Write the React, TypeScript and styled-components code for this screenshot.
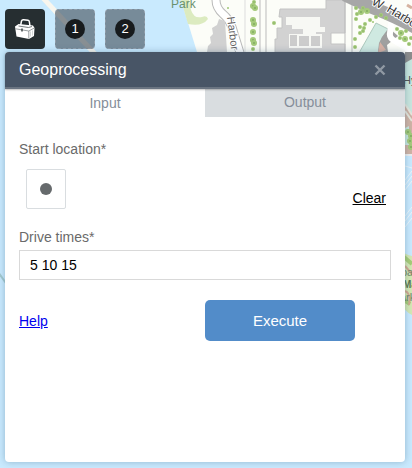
import React, { useState } from "react";
import styled, { createGlobalStyle } from "styled-components";

const GlobalStyle = createGlobalStyle`
  * { box-sizing: border-box; }
  body {
    margin: 0;
    background: #c5e7fa;
    font-family: "Liberation Sans", Arial, sans-serif;
    font-size: 14px;
  }
`;

const Page = styled.main`
  position: relative;
  display: flex;
  flex-direction: column;
  gap: 3px;
  min-height: 100vh;
  padding: 9px 7px 6px 5px;
  overflow: hidden;
`;

const MapCanvas = styled.svg`
  position: absolute;
  inset: 0;
  width: 100%;
  height: 100%;
`;

const Toolbar = styled.nav`
  position: relative;
  display: flex;
  gap: 10px;
`;

const ToolButton = styled.button<{ $active?: boolean }>`
  display: flex;
  align-items: center;
  justify-content: center;
  width: 40px;
  height: 40px;
  padding: 0;
  border: ${(p) => (p.$active ? "0" : "1px dashed #929eaa")};
  border-radius: 4px;
  background: ${(p) => (p.$active ? "#262e31" : "rgba(76, 88, 98, 0.65)")};
  color: #fff;
  cursor: pointer;
`;

const Badge = styled.span`
  width: 20px;
  height: 20px;
  border-radius: 50%;
  background: #171b1d;
  font: 13px/20px "Liberation Sans", Arial, sans-serif;
  text-align: center;
`;

const Panel = styled.section`
  position: relative;
  flex: 1;
  border-radius: 4px;
  background: #fff;
  box-shadow: 0 0 7px rgba(40, 80, 110, 0.35);
`;

const Header = styled.header`
  position: relative;
  display: flex;
  align-items: center;
  justify-content: space-between;
  height: 37px;
  padding: 0 19px 0 14px;
  border-bottom: 2px solid #6a7481;
  border-radius: 4px 4px 0 0;
  background: #485566;
  box-shadow: 0 1px 2px rgba(0, 0, 0, 0.25);
`;

const Title = styled.h1`
  margin: 0;
  color: #fff;
  font-size: 16px;
  font-weight: 400;
  line-height: 20px;
`;

const CloseButton = styled.button`
  display: flex;
  padding: 0;
  border: 0;
  background: none;
  cursor: pointer;
`;

const Tabs = styled.div`
  display: grid;
  grid-template-columns: 1fr 1fr;
`;

const Tab = styled.button<{ $active: boolean }>`
  height: 28px;
  padding: ${(p) => (p.$active ? "0" : "0 0 2px")};
  border: 0;
  background: ${(p) => (p.$active ? "#fff" : "#d9dde0")};
  color: #858e9a;
  font: 14px/20px "Liberation Sans", Arial, sans-serif;
  cursor: pointer;
`;

const Form = styled.form`
  padding: 24px 14px;
`;

const Label = styled.label`
  display: block;
  color: #6a6a6a;
  line-height: 16px;
`;

const LocationRow = styled.div`
  display: flex;
  align-items: flex-end;
  justify-content: space-between;
  margin: 12px 0 20px;
  padding: 0 5px 0 7px;
`;

const PointButton = styled.button`
  display: flex;
  align-items: center;
  justify-content: center;
  width: 40px;
  height: 40px;
  padding: 0;
  border: 1px solid #d9dde0;
  border-radius: 2px;
  background: #fff;
  cursor: pointer;
`;

const Dot = styled.span`
  width: 12px;
  height: 12px;
  border-radius: 50%;
  background: #666a6c;
`;

const TextLink = styled.a<{ $plain?: boolean }>`
  color: ${(p) => (p.$plain ? "#000" : "#0000ee")};
  line-height: 22px;
`;

const TextInput = styled.input`
  display: block;
  width: 100%;
  height: 30px;
  margin-top: 5px;
  padding: 0 10px;
  border: 1px solid #d9d9d9;
  border-radius: 0;
  background: #fff;
  color: #000;
  font: 14px "Liberation Sans", Arial, sans-serif;
`;

const Actions = styled.div`
  display: grid;
  grid-template-columns: 1fr 1fr;
  align-items: center;
  margin-top: 20px;
`;

const ExecuteButton = styled.button`
  width: 150px;
  height: 41px;
  border: 0;
  border-radius: 5px;
  background: #528cc9;
  color: #fff;
  font: 15px "Liberation Sans", Arial, sans-serif;
  cursor: pointer;
`;

const trees: number[][] = [
  [254, 2, 2], [253, 6, 3], [255, 8, 3], [253, 20, 3], [254, 24, 3], [253, 32, 3], [253, 40, 3],
  [254, 43, 3], [253, 49, 2], [228, 8, 1], [274, 23, 2],
  [356, 8, 2], [361, 12, 3], [367, 11, 3], [357, 14, 2], [356, 19, 2], [363, 8, 2], [360, 27, 2],
  [363, 31, 2], [360, 33, 2], [365, 24, 2], [370, 20, 2], [376, 17, 2], [381, 15, 2], [355, 39, 2],
  [355, 47, 2], [364, 28, 2], [386, 18, 2], [373, 22, 1],
  [397, 29, 2], [401, 33, 3], [406, 31, 2], [400, 38, 2], [405, 39, 3], [411, 38, 2], [409, 44, 2],
  [408, 132, 3], [411, 136, 3], [410, 141, 3], [411, 147, 3],
];

function MapBackdrop() {
  return (
    <MapCanvas viewBox="0 0 412 468" preserveAspectRatio="xMinYMin slice" aria-hidden="true">
      <rect width="412" height="468" fill="#c9eafe" />
      <path d="M43 -2 L96 55" stroke="#f8f6ee" strokeWidth="5" />
      <path d="M-2 272 L8 286" stroke="#a3c9cf" strokeWidth="2" />
      <path d="M181 0 L197 52 L412 155 V0Z" fill="#fcfdf8" />
      <path d="M181 0 L188 24 Q202 27 208 19 Q207 15 202 17 Q194 19 191 10 L189 0Z" fill="#dcebc0" />
      <path d="M216 0 Q216 8 223 14 Q229 19 232 27 L241 56" fill="none" stroke="#b9b9b9" strokeWidth="9" />
      <path d="M216 0 Q216 8 223 14 Q229 19 232 27 L241 56" fill="none" stroke="#fff" strokeWidth="7" />
      <path d="M219 19 L225 21 L227 52 H207 L208 46 L211 43 L210 37 L213 34 L212 28 L217 25Z" fill="#d1d1d1" />
      <path d="M260 0V52 M266 0V52" stroke="#bbb" />
      <path d="M245 0V52" stroke="#ddd" />
      <path d="M280 9 H326 V0 H345 V33 H331 V44 H345 V52 H275 V39 H277 V28 H282 V17 H279Z" fill="#d2d2d2" stroke="#c4c4c4" />
      <path d="M289 17 H320 V27 H325 V32 H316 V34 H303 V29 H292 V25 H286 V17Z" fill="#f7f8f4" />
      <path d="M289 34 H322 V48 H289Z" fill="#f7f8f4" />
      <path d="M290 35H297V46H290Z M299 36H309V46H299Z M311 36H320V46H311Z" fill="#ccc" />
      <path d="M345 2V52 M352 3V52" stroke="#bdbdbd" />
      <path d="M376 23 L388 29 L382 38 L378 53 H359Z" fill="#cfe9e1" stroke="#acc8bd" />
      <path d="M389 28 L382 37 L379 43 L378 52 H388 L387 45 L398 36Z" fill="#a0a0a0" />
      <path d="M380 42 L386 50 L378 53Z" fill="#d8b2a5" />
      <path d="M392 17 L390 33 Q389 38 395 41 L415 53" fill="none" stroke="#fff" strokeWidth="6" />
      <path d="M345 -5 Q367 6 388 14 Q402 20 420 30" fill="none" stroke="#a7a7a7" strokeWidth="13" />
      <path d="M407 5 L412 8" stroke="#d6b2a0" strokeWidth="3" />
      <path d="M405 52 H412 V155 H405Z" fill="#cfb3a5" />
      <path d="M405 52 H412 V63 H405Z" fill="#8d8d8d" />
      <path d="M405 63 L412 59 V116 L405 104Z M405 128 L409 126 V145 H405Z" fill="#c9e6de" />
      <path d="M405 104 L412 115 M405 111 L412 121" stroke="#e5e7dc" strokeWidth="2" />
      {trees.map(([x, y, r]) => (
        <g key={`${x}-${y}`}>
          <circle cx={x} cy={y} r={r} fill="#a5ca7b" />
          <circle cx={x} cy={y} r={r / 3} fill="#82ad60" />
        </g>
      ))}
      <path d="M405 155 H412" stroke="#eee" strokeWidth="2" />
      <path d="M405 180 L412 171 M405 185 L412 176 M405 190 L412 181 M405 216 L412 207 M405 221 L412 212 M405 227 L412 218 M405 166 L412 168" stroke="#eaf5fb" />
      <path d="M400 250 Q406 255 412 256 V315 Q405 312 400 302Z" fill="#d4e8b4" />
      <path d="M404 257 L412 264 M404 300 L410 304" stroke="#a7cd78" strokeWidth="4" />
      <path d="M405 266 L412 274 M405 291 Q411 293 409 305" fill="none" stroke="#d2a990" strokeWidth="2" />
      <g fontFamily="Liberation Sans, Arial, sans-serif" fill="#626262">
        <text x="171" y="8" fontSize="12" fill="#6a916e">Park</text>
        <text x="0" y="0" fontSize="11" stroke="#fff" strokeWidth="2" paintOrder="stroke" transform="translate(227 17) rotate(83)">Harbor</text>
        <text x="0" y="0" fontSize="12" fill="#333" stroke="#fff" strokeWidth="2" paintOrder="stroke" transform="translate(371 4) rotate(27)">W</text>
        <text x="0" y="0" fontSize="12" fill="#333" stroke="#fff" strokeWidth="2" paintOrder="stroke" transform="translate(386 11) rotate(31)">Harbor</text>
        <text x="403" y="84" fontSize="11" fill="#555">Hyatt</text>
        <text x="401" y="276" fontSize="11" fill="#71866a">bar</text>
        <text x="403" y="288" fontSize="10" fontWeight="bold" fill="#5d7750">Ma</text>
        <text x="400" y="301" fontSize="11" fill="#71866a">ark</text>
      </g>
    </MapCanvas>
  );
}

function ToolboxIcon() {
  return (
    <svg width="22" height="22" viewBox="0 0 22 22" aria-hidden="true">
      <path d="M1 8.5 L4.5 6 L19 7.5 L20.5 10 L20 18 L15 21 L2.5 18.5Z" fill="#fff" />
      <path d="M6.5 8 L7.5 3 Q8 1.5 9.5 1.7 L14 2.3 Q15.3 2.5 15.4 4 L16 8.5" fill="none" stroke="#fff" strokeWidth="1.5" />
      <path d="M1.5 10.8 L14.8 13 L20.3 10 M14.8 13 V20.5" fill="none" stroke="#6d7477" strokeWidth="0.7" />
      <path d="M4.5 8 L14.5 9.5 L18 8.5" fill="none" stroke="#52595c" strokeWidth="0.8" />
      <path d="M8 10.5 V13.5" stroke="#262e31" strokeWidth="1.3" />
      <path d="M16.5 13.5 V18.5 M18.5 12.5 V17.5" stroke="#b9bdbe" strokeWidth="0.6" />
    </svg>
  );
}

export default function App() {
  const [tab, setTab] = useState("input");
  const [times, setTimes] = useState("5 10 15");
  return (
    <>
      <GlobalStyle />
      <Page>
        <MapBackdrop />
        <Toolbar aria-label="Map tools">
          <ToolButton $active aria-label="Geoprocessing tools"><ToolboxIcon /></ToolButton>
          <ToolButton><Badge>1</Badge></ToolButton>
          <ToolButton><Badge>2</Badge></ToolButton>
        </Toolbar>
        <Panel>
          <Header>
            <Title>Geoprocessing</Title>
            <CloseButton aria-label="Close">
              <svg width="12" height="12" viewBox="0 0 12 12" aria-hidden="true">
                <path d="M1.5 1.5 L10.5 10.5 M10.5 1.5 L1.5 10.5" stroke="#9099a3" strokeWidth="2.4" />
              </svg>
            </CloseButton>
          </Header>
          <Tabs role="tablist">
            <Tab role="tab" aria-selected={tab === "input"} $active={tab === "input"} onClick={() => setTab("input")}>Input</Tab>
            <Tab role="tab" aria-selected={tab === "output"} $active={tab === "output"} onClick={() => setTab("output")}>Output</Tab>
          </Tabs>
          <Form onSubmit={(e) => e.preventDefault()}>
            <Label htmlFor="start-location">Start location*</Label>
            <LocationRow>
              <PointButton id="start-location" type="button"><Dot /></PointButton>
              <TextLink href="#clear" $plain>Clear</TextLink>
            </LocationRow>
            <Label htmlFor="drive-times">Drive times*</Label>
            <TextInput id="drive-times" value={times} onChange={(e) => setTimes(e.target.value)} />
            <Actions>
              <div><TextLink href="#help">Help</TextLink></div>
              <ExecuteButton type="submit">Execute</ExecuteButton>
            </Actions>
          </Form>
        </Panel>
      </Page>
    </>
  );
}
